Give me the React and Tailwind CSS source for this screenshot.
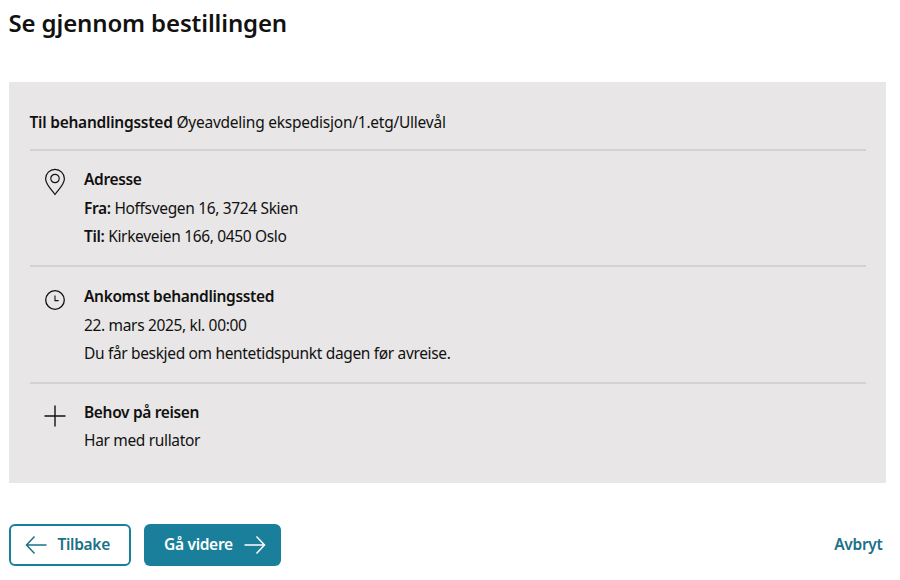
function Pin() {
  return (
    <svg width="24" height="28" viewBox="0 0 24 28" fill="none" stroke="#111" strokeWidth="1.2">
      <path d="M12 26.5 C8.5 21.5 2.6 16.5 2.6 10.8 A9.4 9.4 0 0 1 21.4 10.8 C21.4 16.5 15.5 21.5 12 26.5 Z" />
      <circle cx="12" cy="10.5" r="4.2" />
    </svg>
  );
}
function Clock() {
  return (
    <svg width="22" height="22" viewBox="0 0 22 22" fill="none" stroke="#111" strokeWidth="1.3">
      <circle cx="11" cy="11" r="9.3" />
      <path d="M11 6.5V11.6H14.6" strokeWidth="1.1" />
    </svg>
  );
}
function Plus() {
  return (
    <svg width="24" height="24" viewBox="0 0 24 24" fill="none" stroke="#111" strokeWidth="1.4">
      <path d="M12 1.5V22.5M1.5 12H22.5" />
    </svg>
  );
}
function Arrow({ left }) {
  return (
    <svg width="22" height="20" viewBox="0 0 22 20" fill="none" stroke="currentColor" strokeWidth="1.5">
      {left ? <path d="M21.5 10H1.5M9.5 1.5L1.5 10L9.5 18.5" /> : <path d="M0.5 10H20.5M12.5 1.5L20.5 10L12.5 18.5" />}
    </svg>
  );
}
function Row({ icon, children, cls }) {
  return (
    <div className={"flex " + cls}>
      <div className="w-[54.5px] pl-[13px] shrink-0">{icon}</div>
      <div className="flex flex-col gap-[8px]">{children}</div>
    </div>
  );
}
const L = "text-[15.5px] leading-[20.5px] text-[#111] tracking-[-0.34px]";
const B = "text-[15.5px] font-semibold tracking-[-0.3px]";
export default function App() {
  return (
    <div className="w-[900px] h-[580px] bg-white font-['Noto_Sans',sans-serif] overflow-hidden flex flex-col pl-[8.5px] pt-[5px]">
      <h1 className="text-[24px] leading-[36px] font-semibold text-[#111] tracking-[-0.13px]">Se gjennom bestillingen</h1>
      <section className="mt-[41px] w-[877px] h-[401px] bg-[#e8e6e6] px-[21px] flex flex-col">
        <div className="text-[15.5px] leading-[20.5px] text-[#111] tracking-[-0.24px] pt-[30px] h-[66.5px]">
          <b className="font-semibold">Til behandlingssted</b> Øyeavdeling ekspedisjon/1.etg/Ullevål
        </div>
        <div className="h-[2px] bg-[#d3d2d2] w-[836px]" />
        <Row cls="pt-[18.5px] h-[114.5px]" icon={<div className="-mt-[1px]"><Pin /></div>}>
          <div className={L + " font-semibold"}>Adresse</div>
          <div className={L}><b className="font-semibold">Fra:</b> Hoffsvegen 16, 3724 Skien</div>
          <div className={L}><b className="font-semibold">Til:</b> Kirkeveien 166, 0450 Oslo</div>
        </Row>
        <div className="h-[2px] bg-[#d3d2d2] w-[836px]" />
        <Row cls="pt-[19px] h-[114.5px]" icon={<div className="mt-[3px] ml-[1px]"><Clock /></div>}>
          <div className={L + " font-semibold"}>Ankomst behandlingssted</div>
          <div className={L}>22. mars 2025, kl. 00:00</div>
          <div className={L}>Du får beskjed om hentetidspunkt dagen før avreise.</div>
        </Row>
        <div className="h-[2px] bg-[#d3d2d2] w-[836px]" />
        <Row cls="pt-[18px]" icon={<div className="mt-[2px]"><Plus /></div>}>
          <div className={L + " font-semibold"}>Behov på reisen</div>
          <div className={L}>Har med rullator</div>
        </Row>
      </section>
      <div className="mt-[41px] flex items-center w-[877px]">
        <button className={"w-[122.5px] h-[42px] rounded-[6px] border-2 border-[#1a7f9b] bg-white text-[#1b7189] flex items-center pl-[14px] gap-[11px] " + B}>
          <Arrow left /> Tilbake
        </button>
        <button className={"ml-[13px] w-[137px] h-[42px] rounded-[6px] bg-[#1a7f9b] text-white flex items-center pl-[20px] gap-[11px] " + B}>
          Gå videre <Arrow />
        </button>
        <a className={"ml-auto mr-[3px] text-[#1b7189] " + B}>Avbryt</a>
      </div>
    </div>
  );
}
